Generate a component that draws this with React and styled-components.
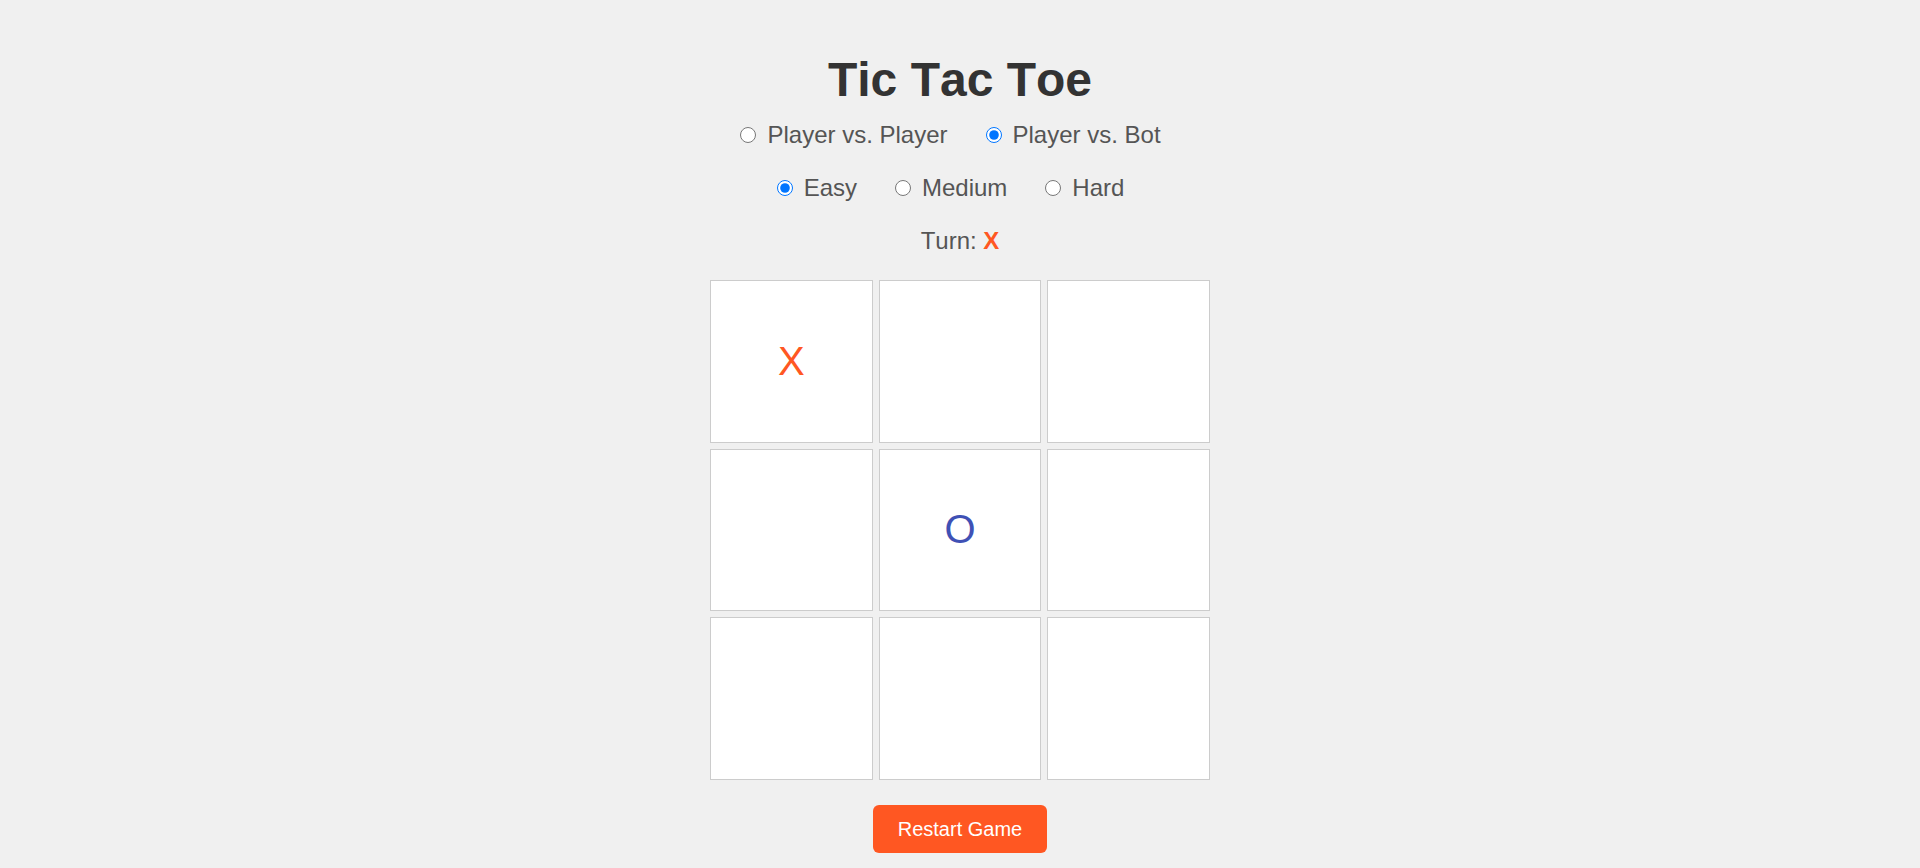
import React, { useState } from "react";
import styled, { createGlobalStyle } from "styled-components";

const GlobalStyle = createGlobalStyle`
  html, body {
    margin: 0;
    padding: 0;
    background: #f0f0f0;
  }
  body {
    font-family: "Liberation Sans", Arial, sans-serif;
    font-kerning: none;
    color: #555;
  }
`;

const Page = styled.div`
  display: flex;
  flex-direction: column;
  align-items: center;
  padding-top: 52px;
  min-height: 868px;
  box-sizing: border-box;
`;

const Title = styled.h1`
  margin: 0 0 13px;
  font-size: 48px;
  line-height: 56px;
  font-weight: bold;
  color: #333;
  font-kerning: none;
`;

const Controls = styled.div`
  display: flex;
  flex-direction: column;
  align-items: center;
  gap: 25px;
`;

const OptionRow = styled.div`
  display: flex;
  justify-content: center;
  gap: 7px;
  font-size: 24px;
  line-height: 28px;
`;

const Option = styled.label`
  display: inline-flex;
  align-items: center;
  gap: 11px;
  padding-left: 6px;
  margin-right: 25px;
  color: #555;
  cursor: pointer;
`;

const Radio = styled.input.attrs({ type: "radio" })`
  width: 16px;
  height: 16px;
  margin: 0;
  accent-color: #0075ff;
`;

const Turn = styled.div`
  font-size: 24px;
  line-height: 28px;
  color: #555;
`;

const TurnMark = styled.span`
  font-weight: bold;
  color: ${(p) => (p.$player === "O" ? "#3f51b5" : "#ff5722")};
`;

const Board = styled.div`
  margin-top: 25px;
  width: 500px;
  height: 500px;
  display: grid;
  grid-template-columns: repeat(3, 1fr);
  grid-template-rows: repeat(3, 1fr);
  gap: 6px;
`;

const Cell = styled.div`
  box-sizing: border-box;
  background: #fff;
  border: 1px solid #ccc;
  display: flex;
  align-items: center;
  justify-content: center;
  font-size: 40px;
  color: ${(p) => (p.$value === "O" ? "#3f51b5" : "#ff5722")};
  cursor: pointer;
`;

const RestartButton = styled.button`
  margin-top: 25px;
  padding: 12px 25px;
  font-family: "Liberation Sans", Arial, sans-serif;
  font-kerning: none;
  font-size: 20px;
  line-height: 24px;
  color: #fff;
  background: #ff5722;
  border: none;
  border-radius: 6px;
  cursor: pointer;
`;

export default function App() {
  const [mode, setMode] = useState("bot");
  const [level, setLevel] = useState("easy");
  const [cells, setCells] = useState(["X", "", "", "", "O", "", "", "", ""]);

  return (
    <>
      <GlobalStyle />
      <Page>
        <Title>Tic Tac Toe</Title>
        <Controls>
          <OptionRow>
            <Option>
              <Radio name="mode" checked={mode === "pvp"} onChange={() => setMode("pvp")} />
              Player vs. Player
            </Option>
            <Option>
              <Radio name="mode" checked={mode === "bot"} onChange={() => setMode("bot")} />
              Player vs. Bot
            </Option>
          </OptionRow>
          <OptionRow>
            {[
              ["easy", "Easy"],
              ["medium", "Medium"],
              ["hard", "Hard"],
            ].map(([key, label]) => (
              <Option key={key}>
                <Radio name="level" checked={level === key} onChange={() => setLevel(key)} />
                {label}
              </Option>
            ))}
          </OptionRow>
          <Turn>
            Turn: <TurnMark $player="X">X</TurnMark>
          </Turn>
        </Controls>
        <Board>
          {cells.map((v, i) => (
            <Cell key={i} $value={v}>
              {v}
            </Cell>
          ))}
        </Board>
        <RestartButton onClick={() => setCells(Array(9).fill(""))}>Restart Game</RestartButton>
      </Page>
    </>
  );
}
